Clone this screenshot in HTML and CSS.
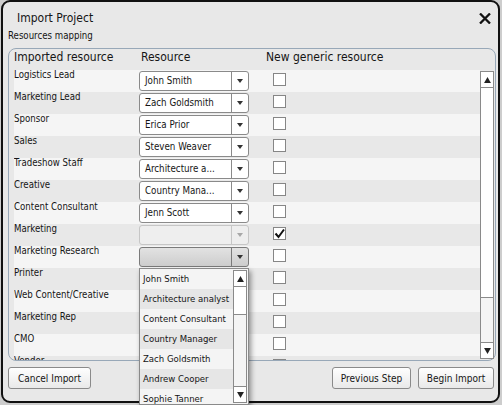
FILE: index.html
```html
<!DOCTYPE html>
<html>
<head>
<meta charset="utf-8">
<link rel="stylesheet" href="styles.css">
</head>
<body>
<div class="dialog">
  <div class="titlebar">
    <span class="title">Import Project</span>
    <svg class="close" viewBox="0 0 12 11" width="12" height="11"><path d="M1 0.5 L11 10.5 M11 0.5 L1 10.5" stroke="#111" stroke-width="2.3" fill="none"/></svg>
  </div>
  <div class="subtitle">Resources mapping</div>
  <div class="group">
    <div class="head">
      <span class="h1">Imported resource</span>
      <span class="h2">Resource</span>
      <span class="h3">New generic resource</span>
    </div>
    <div class="body">
      <div class="rows">
        <div class="row"><span class="label">Logistics Lead</span><div class="select"><span class="val">John Smith</span><span class="arrow"></span></div><span class="check"></span></div>
        <div class="row"><span class="label">Marketing Lead</span><div class="select"><span class="val">Zach Goldsmith</span><span class="arrow"></span></div><span class="check"></span></div>
        <div class="row"><span class="label">Sponsor</span><div class="select"><span class="val">Erica Prior</span><span class="arrow"></span></div><span class="check"></span></div>
        <div class="row"><span class="label">Sales</span><div class="select"><span class="val">Steven Weaver</span><span class="arrow"></span></div><span class="check"></span></div>
        <div class="row"><span class="label">Tradeshow Staff</span><div class="select"><span class="val">Architecture a...</span><span class="arrow"></span></div><span class="check"></span></div>
        <div class="row"><span class="label">Creative</span><div class="select"><span class="val">Country Mana...</span><span class="arrow"></span></div><span class="check"></span></div>
        <div class="row"><span class="label">Content Consultant</span><div class="select"><span class="val">Jenn Scott</span><span class="arrow"></span></div><span class="check"></span></div>
        <div class="row"><span class="label">Marketing</span><div class="select disabled"><span class="val"></span><span class="arrow"></span></div><span class="check"><svg viewBox="0 0 11 11" width="11" height="11"><path d="M1.5 5.5 L4.5 9 L10 1.5" stroke="#111" stroke-width="2" fill="none"/></svg></span></div>
        <div class="row"><span class="label">Marketing Research</span><div class="select open"><span class="val"></span><span class="arrow"></span></div><span class="check"></span></div>
        <div class="row"><span class="label">Printer</span><div class="select"><span class="val"></span><span class="arrow"></span></div><span class="check"></span></div>
        <div class="row"><span class="label">Web Content/Creative</span><div class="select"><span class="val"></span><span class="arrow"></span></div><span class="check"></span></div>
        <div class="row"><span class="label">Marketing Rep</span><div class="select"><span class="val"></span><span class="arrow"></span></div><span class="check"></span></div>
        <div class="row"><span class="label">CMO</span><div class="select"><span class="val"></span><span class="arrow"></span></div><span class="check"></span></div>
        <div class="row"><span class="label">Vendor</span><div class="select"><span class="val"></span><span class="arrow"></span></div><span class="check"></span></div>
      </div>
      <div class="vscroll">
        <div class="sb-up"><svg viewBox="0 0 8 7" width="7" height="6"><polygon points="4,0 8,7 0,7" fill="#222"/></svg></div>
        <div class="sb-thumb"></div>
        <div class="sb-track"></div>
        <div class="sb-down"><svg viewBox="0 0 8 7" width="7" height="6"><polygon points="0,0 8,0 4,7" fill="#222"/></svg></div>
      </div>
    </div>
  </div>
  <div class="footer">
    <button class="btn cancel">Cancel Import</button>
    <span class="spacer"></span>
    <button class="btn prev">Previous Step</button>
    <button class="btn begin">Begin Import</button>
  </div>
  <div class="popup">
    <div class="list">
      <div class="item">John Smith</div>
      <div class="item">Architecture analyst</div>
      <div class="item">Content Consultant</div>
      <div class="item">Country Manager</div>
      <div class="item">Zach Goldsmith</div>
      <div class="item">Andrew Cooper</div>
      <div class="item">Sophie Tanner</div>
    </div>
    <div class="pscroll">
      <div class="sb-up"><svg viewBox="0 0 8 7" width="7" height="6"><polygon points="4,0 8,7 0,7" fill="#222"/></svg></div>
      <div class="psb-thumb"></div>
      <div class="sb-track"></div>
      <div class="sb-down"><svg viewBox="0 0 8 7" width="7" height="6"><polygon points="0,0 8,0 4,7" fill="#222"/></svg></div>
    </div>
  </div>
</div>
</body>
</html>
```
FILE: styles.css
```css
* { box-sizing: border-box; }
html, body { margin: 0; overflow: hidden; }
body {
  width: 502px;
  height: 405px;
  background: #cdcdcd;
  font-family: "DejaVu Sans Condensed", "DejaVu Sans", sans-serif;
  font-stretch: condensed;
  color: #151515;
}
.dialog {
  position: relative;
  margin-left: 1px;
  width: 499px;
  height: 403px;
  border: 2px solid #111;
  border-radius: 9px;
  background: #e8e8e8;
  padding: 0 2px 0 5px;
  display: flex;
  flex-direction: column;
}
.titlebar {
  display: flex;
  align-items: flex-start;
  padding-top: 7px;
  height: 27px;
}
.title {
  flex: 1;
  font-size: 12px;
  line-height: 18px;
  padding-left: 9px;
}
.close {
  margin-top: 4px;
  margin-right: 5px;
}
.subtitle {
  font-size: 9.6px;
  line-height: 13px;
  margin-bottom: 6px;
}
.group {
  height: 313px;
  border: 1px solid #98a8b8;
  border-radius: 8px;
  padding: 0 1px 0 5px;
  display: flex;
  flex-direction: column;
}
.head {
  height: 21px;
  display: flex;
  font-size: 12px;
  line-height: 17px;
}
.h1 { width: 127px; }
.h2 { width: 125px; }
.body {
  height: 290px;
  display: flex;
}
.rows {
  width: 466px;
  height: 290px;
  overflow: hidden;
}
.row {
  height: 22px;
  display: flex;
  align-items: flex-start;
}
.row:nth-child(odd) { background: #f5f5f5; }
.label {
  width: 125px;
  margin-top: -1px;
  font-size: 9.6px;
  line-height: 12px;
  white-space: nowrap;
}
.select {
  width: 110px;
  height: 20px;
  margin-top: 1px;
  border: 1px solid #8a8a8a;
  border-radius: 3px;
  background: #fff;
  display: flex;
}
.val {
  flex: 1;
  padding-left: 5px;
  font-size: 9.7px;
  line-height: 18px;
  white-space: nowrap;
  overflow: hidden;
}
.arrow {
  width: 17px;
  border-left: 1px solid #8a8a8a;
  display: flex;
  align-items: center;
  justify-content: center;
}
.arrow::after {
  content: "";
  border-style: solid;
  border-width: 4px 3.5px 0 3.5px;
  border-color: #333 transparent transparent transparent;
}
.select.disabled {
  background: #eeeeee;
  border-color: #c6c6c6;
}
.select.disabled .arrow { border-left-color: #c6c6c6; }
.select.disabled .arrow::after { border-top-color: #a8a8a8; }
.select.open {
  background: linear-gradient(#e2e2e2, #cdcdcd);
  border-color: #7a7a7a;
}
.select.open .arrow { border-left-color: #7a7a7a; }
.check {
  width: 13px;
  height: 13px;
  margin-left: 24px;
  margin-top: 3px;
  border: 1px solid #868686;
  background: #fff;
  display: flex;
  align-items: center;
  justify-content: center;
}
.vscroll {
  width: 14px;
  margin-top: 1px;
  height: 288px;
  border: 1px solid #8a8a8a;
  background: #f4f4f4;
  display: flex;
  flex-direction: column;
}
.sb-up, .sb-down {
  height: 16px;
  background: #fff;
  display: flex;
  align-items: center;
  justify-content: center;
}
.sb-up { border-bottom: 1px solid #8a8a8a; }
.sb-down { border-top: 1px solid #8a8a8a; }
.sb-thumb {
  height: 210px;
  background: #fff;
  border-bottom: 1px solid #8a8a8a;
}
.sb-track { flex: 1; }
.footer {
  margin-top: 6px;
  display: flex;
  gap: 7px;
  padding-right: 2px;
}
.spacer { flex: 1; }
.btn {
  height: 22px;
  padding: 0;
  border: 1px solid #8a8a8a;
  border-radius: 3px;
  background: linear-gradient(#fefefe, #e9e9e9);
  font-family: inherit;
  font-stretch: condensed;
  font-size: 10px;
  color: #151515;
}
.cancel { width: 83px; }
.prev { width: 79px; }
.begin { width: 76px; }
.popup {
  position: absolute;
  left: 136px;
  top: 266px;
  width: 110px;
  height: 137px;
  border: 1px solid #8a8a8a;
  background: #f4f4f4;
  box-shadow: 2px 3px 5px rgba(0, 0, 0, 0.4);
  display: flex;
}
.list {
  width: 93px;
  overflow: hidden;
}
.item {
  height: 20px;
  padding-left: 3px;
  font-size: 9.5px;
  line-height: 20px;
  white-space: nowrap;
}
.item:nth-child(odd) { background: #f4f4f4; }
.item:nth-child(even) { background: #e6e6e6; }
.pscroll {
  width: 14px;
  margin-top: 1px;
  height: 133px;
  border: 1px solid #8a8a8a;
  background: #f4f4f4;
  display: flex;
  flex-direction: column;
}
.psb-thumb {
  height: 28px;
  background: #fff;
  border-bottom: 1px solid #8a8a8a;
}
```
